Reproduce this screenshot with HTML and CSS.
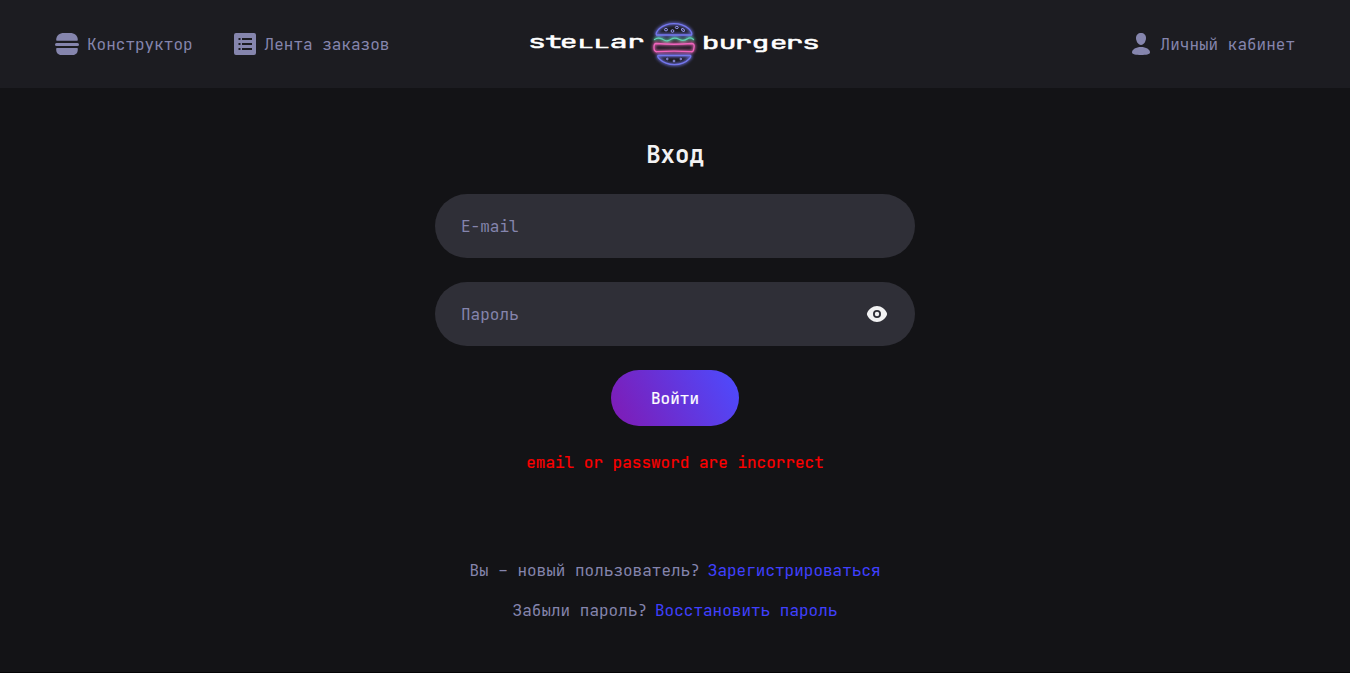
FILE: index.html
```
<!DOCTYPE html>
<html lang="ru">
<head>
<meta charset="utf-8">
<title>Stellar Burgers</title>
<link rel="stylesheet" href="styles.css">
</head>
<body>
<header class="header">
  <nav class="nav">
    <a class="nav-link">
      <svg class="icon" width="24" height="24" viewBox="0 0 24 24"><path d="M1.200 7.800C1.200 3.500 4.500 1 9 1h6c4.500 0 7.800 2.500 7.800 6.800v.2q0 .7-.7.7H1.900q-.7 0-.7-.7z"/><rect x="0" y="11" width="24" height="3" rx="1.500"/><path d="M1.900 16h20.200q.7 0 .7.700v.8c0 3.200-1.800 5.500-5 5.500H6.200c-3.200 0-5-2.300-5-5.500v-.8q0-.7.7-.7z"/></svg>
      <span>Конструктор</span>
    </a>
    <a class="nav-link">
      <svg class="icon" width="24" height="24" viewBox="0 0 24 24"><path fill-rule="evenodd" d="M3 1h18a2 2 0 0 1 2 2v18a2 2 0 0 1-2 2H3a2 2 0 0 1-2-2V3a2 2 0 0 1 2-2zM5.500 6v2h2V6zm3.500 0v2h10V6zM5.500 11v2h2v-2zm3.500 0v2h10v-2zM5.500 16v2h2v-2zm3.500 0v2h10v-2z"/></svg>
      <span>Лента заказов</span>
    </a>
  </nav>
  <svg class="logo" width="292" height="50" viewBox="528 19 292 50">
    <defs><filter id="glow" x="-30%" y="-50%" width="160%" height="200%"><feGaussianBlur stdDeviation="1.800"/></filter>
    <g id="burger" fill="none" stroke-linecap="round" stroke-linejoin="round">
      <g stroke="#7477ed"><path d="M656.500 35c-1-1.500 1-4.500 3-6.500 8-6.500 21-6.500 29 0 2 2 4 5 3 6.500z"/><path d="M658.500 55.500h31.500c1.500 0 .5 2-1 3.500-7 7.500-22 7.500-29.500 0-1.500-1.500-2.500-3.500-1-3.500z"/></g>
      <path stroke="#62ceb0" d="M654.500 39.500c4-3 6-1 8.500 0 4 2.500 6 1 9-.8 3-1.500 5-.5 7.500.8 4 2 6 .5 8-.8 2-1.200 4-1 6 .8"/>
      <path stroke="#f065bd" d="M656 43.500c12 1 24 1 36 0 2 0 2.500 2 2 4-.3 3-1 4.500-3 4.200-11-.7-23-.7-34 0-2 .3-3-1.500-3-4.200 0-2 0-4 2-4z"/>
    </g></defs>
    <use href="#burger" filter="url(#glow)" stroke-width="2.800" opacity=".8"/>
    <use href="#burger" stroke-width="1.300"/>
    <g fill="none" stroke="#9899f5" stroke-width="1"><ellipse cx="666" cy="29.700" rx="1.600" ry="1.200"/><ellipse cx="672.500" cy="31" rx="1.400" ry="1.300"/><ellipse cx="676.800" cy="27.500" rx="1.500" ry="1.100"/><ellipse cx="683" cy="30" rx="1.700" ry="1.100" transform="rotate(35 683 30)"/><circle cx="667.300" cy="59" r=".8"/><circle cx="674" cy="61" r=".9"/><circle cx="680.800" cy="59" r=".8"/></g>
    <text class="wordmark" transform="translate(529 48) scale(1.700 1)" x="-.6 9.200 18.100">ste</text>
    <text class="wordmark low" transform="translate(577.500 48) scale(2.150 1)" x="0 7.400">ll</text>
    <text class="wordmark" transform="translate(529 48) scale(1.700 1)" x="47.500 57.700">ar</text>
    <text class="wordmark" transform="translate(703 49) scale(1.700 1)" x="-.8 9.200 18.500 28.600 39.300 48.500 58.300">burgers</text>
  </svg>
  <a class="nav-link profile">
    <svg class="icon" width="24" height="24" viewBox="0 0 24 24"><path d="M12 1c3 0 5 2 5 5s-2 7-5 7-5-4-5-7 2-5 5-5z"/><path d="M12 15c5 0 9 2.400 9 5.500 0 1.800-4 2.500-9 2.500s-9-.7-9-2.500C3 17.400 7 15 12 15z"/></svg>
    <span>Личный кабинет</span>
  </a>
</header>
<main class="main">
  <h1 class="title">Вход</h1>
  <form class="form">
    <label class="field"><input class="input" type="email" placeholder="E-mail"></label>
    <label class="field"><input class="input" type="password" placeholder="Пароль">
      <svg width="24" height="24" viewBox="0 0 24 24"><path fill="#f2f2f3" fill-rule="evenodd" d="M12 4c4.500 0 8 3 9.700 6.400a3.500 3.500 0 0 1 0 3.200C20 17 16.500 20 12 20s-8-3-9.700-6.400a3.500 3.500 0 0 1 0-3.200C4 7 7.500 4 12 4zm0 4a4 4 0 1 0 0 8 4 4 0 0 0 0-8z"/><circle cx="12" cy="12" r="2.200" fill="#f2f2f3"/></svg>
    </label>
    <button class="submit" type="button">Войти</button>
  </form>
  <p class="error">email or password are incorrect</p>
  <div class="hints">
    <p class="hint">Вы – новый пользователь?<a class="link">Зарегистрироваться</a></p>
    <p class="hint">Забыли пароль?<a class="link">Восстановить пароль</a></p>
  </div>
</main>
</body>
</html>
```

FILE: styles.css
```
* { box-sizing: border-box; }
body {
  margin: 0;
  height: 673px;
  overflow: hidden;
  background: #131316;
  border-bottom: 1px solid #050506;
  color: #8585ad;
  font: 16px/24px "JetBrains Mono", "DejaVu Sans Mono", monospace;
}
.header {
  display: grid;
  grid-template-columns: 1fr 292px 1fr;
  align-items: center;
  height: 88px;
  padding: 0 55px;
  background: #1c1c21;
}
.nav { display: flex; gap: 40px; }
.nav-link { display: flex; gap: 8px; align-items: center; white-space: nowrap; }
.nav-link span { padding-top: 2px; }
.icon { fill: #8585ad; flex: none; }
.profile { justify-self: end; }
.logo { display: block; margin-left: -1px; }
.wordmark { font: 17.500px "JetBrains Mono", "DejaVu Sans Mono", monospace; fill: #fff; stroke: #fff; stroke-width: .5px; }
.low { font-variant-caps: small-caps; }
.main { display: flex; flex-direction: column; align-items: center; padding-top: 52px; }
.title { margin: 0 0 24px; color: #f2f2f3; font-size: 24px; line-height: 30px; }
.form { display: flex; flex-direction: column; align-items: center; gap: 24px; }
.field { display: flex; align-items: center; width: 480px; height: 64px; padding: 0 26px; border-radius: 32px; background: #2f2f37; }
.input { flex: 1; min-width: 0; padding: 2px 0 0; border: 0; outline: 0; background: none; font: inherit; color: #f2f2f3; }
.input::placeholder { color: #8585ad; opacity: 1; }
.submit {
  width: 128px;
  height: 56px;
  padding: 2px 0 0;
  border: 0;
  border-radius: 28px;
  background: linear-gradient(63deg, #801ab3 0%, #4c4cff 100%);
  color: #fff;
  font: inherit;
  -webkit-text-stroke: .2px #fff;
}
.error { margin: 25px 0 84px; color: #ff0000; -webkit-text-stroke: .2px #ff0000; }
.hints { display: flex; flex-direction: column; align-items: center; gap: 16px; }
.hint { display: flex; gap: 8px; margin: 0; }
.link { color: #4040ff; }
```
